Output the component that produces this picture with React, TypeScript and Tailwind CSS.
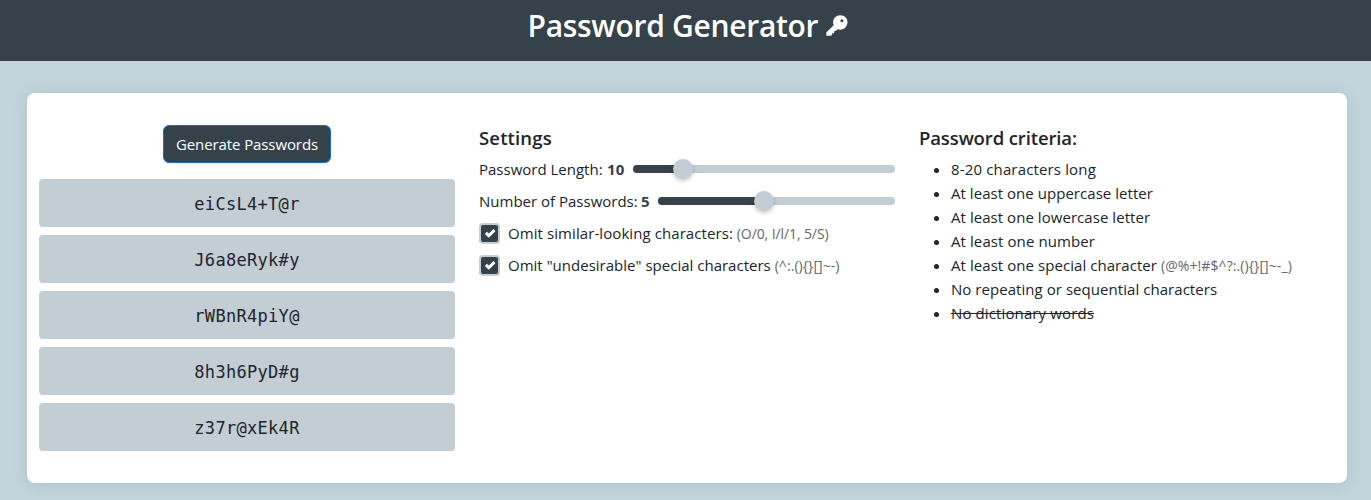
import type { ReactNode } from "react";

const passwords = ["eiCsL4+T@r", "J6a8eRyk#y", "rWBnR4piY@", "8h3h6PyD#g", "z37r@xEk4R"];

type SliderProps = {
  label: string;
  labelClass: string;
  value: number;
  valueClass: string;
  min: number;
  max: number;
};

function KeyIcon({ className }: { className: string }) {
  return (
    <svg viewBox="0 0 22 21" className={className} fill="currentColor">
      <path
        fillRule="evenodd"
        d="M14.3 0.2C18.4 0.2 21.5 3.1 21.5 7C21.5 11.3 18.3 14.7 14.2 14.7C13.2 14.7 12.4 14.5 11.6 14.2L9.6 16.1H8.3V17.6L7.6 18.2H6.1V19.6L4.9 20.8H1.1C0.6 20.8 0.3 20.5 0.3 20V17.5L7.7 10.3C7.3 9.3 7.1 8.4 7.1 7.3C7.1 3.3 10.2 0.2 14.3 0.2ZM15.9 4.3A1.5 1.5 0 1 0 15.9 7.3A1.5 1.5 0 1 0 15.9 4.3Z"
      />
    </svg>
  );
}

function Slider({ label, labelClass, value, valueClass, min, max }: SliderProps) {
  const fraction = (value - min) / (max - min);
  return (
    <div className="mb-2 flex h-6 items-center">
      <span className={`shrink-0 whitespace-nowrap ${labelClass}`}>{label}</span>
      <b className={`shrink-0 text-[#36424a] ${valueClass}`}>{value}</b>
      <div className="flex h-2 grow items-center rounded-full bg-[#c3cdd4]">
        <div
          className="h-2 shrink-0 rounded-l-full bg-[#36424a]"
          style={{ width: `calc((100% - 20px) * ${fraction} + 10px)` }}
        />
        <div className="-ml-2.5 size-5 shrink-0 rounded-full bg-[#c3cdd4] shadow-[0_2px_4px_rgba(0,0,0,0.22)]" />
      </div>
    </div>
  );
}

function Option({ children }: { children: ReactNode }) {
  return (
    <div className="mb-2 flex h-6 items-center">
      <span className="mr-[8px] flex size-[21px] shrink-0 items-center justify-center rounded-[4px] border-2 border-[#c3cdd4] bg-[#36424a]">
        <svg viewBox="0 0 16 16" className="size-4" fill="none" stroke="white" strokeWidth="3">
          <path d="M3.9 7.9 6.8 10.6 12.5 5.1" />
        </svg>
      </span>
      <span className="whitespace-nowrap">{children}</span>
    </div>
  );
}

export default function App() {
  return (
    <div className="min-h-[500px] bg-[#c3d5dc] font-['Open_Sans',sans-serif] text-[15px] leading-6 text-[#212529]">
      <header className="flex h-[61px] items-start justify-center bg-[#36424a] pt-[7px] pl-[4px] text-white">
        <h1 className="w-[298px] text-[30px] leading-[38px] font-semibold tracking-[-0.3px] whitespace-nowrap">
          Password Generator
        </h1>
        <KeyIcon className="mt-2 h-[21px] w-[22px]" />
      </header>
      <main className="mt-8 mr-6 ml-[27px] grid h-[390px] grid-cols-3 gap-6 rounded-lg bg-white px-3 py-8 shadow-[0_2px_16px_rgba(0,0,0,0.1)]">
        <section className="flex flex-col items-center">
          <button className="mb-4 h-[38px] w-[168px] shrink-0 rounded-md border border-[#0d6efd] bg-[#36424a] tracking-[-0.1px] whitespace-nowrap text-white">
            Generate Passwords
          </button>
          <div className="flex w-full flex-col gap-2">
            {passwords.map((password) => (
              <div
                key={password}
                className="flex h-12 items-center justify-center rounded-[4px] bg-[#c3cdd4] pt-px font-['DejaVu_Sans_Mono',monospace] text-[17px] tracking-[0.3px]"
              >
                {password}
              </div>
            ))}
          </div>
        </section>
        <section>
          <h5 className="mb-[7px] pt-px text-[18.5px] leading-6 font-semibold tracking-[0.15px]">Settings</h5>
          <Slider
            label="Password Length:"
            labelClass="w-[128px]"
            value={10}
            valueClass="w-[26px] tracking-[0.2px]"
            min={8}
            max={20}
          />
          <Slider
            label="Number of Passwords:"
            labelClass="w-[162px]"
            value={5}
            valueClass="w-[17px]"
            min={1}
            max={10}
          />
          <Option>
            <span className="tracking-[0.08px]">Omit similar-looking characters:</span>{" "}
            <small className="text-[14px] tracking-[-0.1px] text-[#63676b]">(O/0, I/l/1, 5/S)</small>
          </Option>
          <Option>
            <span className="tracking-[0.01px]">Omit "undesirable" special characters</span>{" "}
            <small className="text-[14px] tracking-[0.06px] text-[#63676b]">{"(^:.(){}[]~-)"}</small>
          </Option>
        </section>
        <section>
          <h5 className="mb-[7px] pt-px text-[18.5px] leading-6 font-semibold tracking-[-0.12px]">Password criteria:</h5>
          <ul className="list-disc pl-8 whitespace-nowrap">
            <li className="h-6 tracking-[0.15px]">8-20 characters long</li>
            <li className="h-6 tracking-[0.04px]">At least one uppercase letter</li>
            <li className="h-6 tracking-[0.05px]">At least one lowercase letter</li>
            <li className="h-6 tracking-[0.09px]">At least one number</li>
            <li className="h-6">
              <span className="tracking-[0.06px]">At least one special character</span>{" "}
              <small className="text-[14px] tracking-[0.09px] text-[#63676b]">{"(@%+!#$^?:.(){}[]~-_)"}</small>
            </li>
            <li className="h-6 tracking-[0.05px]">No repeating or sequential characters</li>
            <li className="h-6 tracking-[0.12px] line-through">No dictionary words</li>
          </ul>
        </section>
      </main>
    </div>
  );
}
